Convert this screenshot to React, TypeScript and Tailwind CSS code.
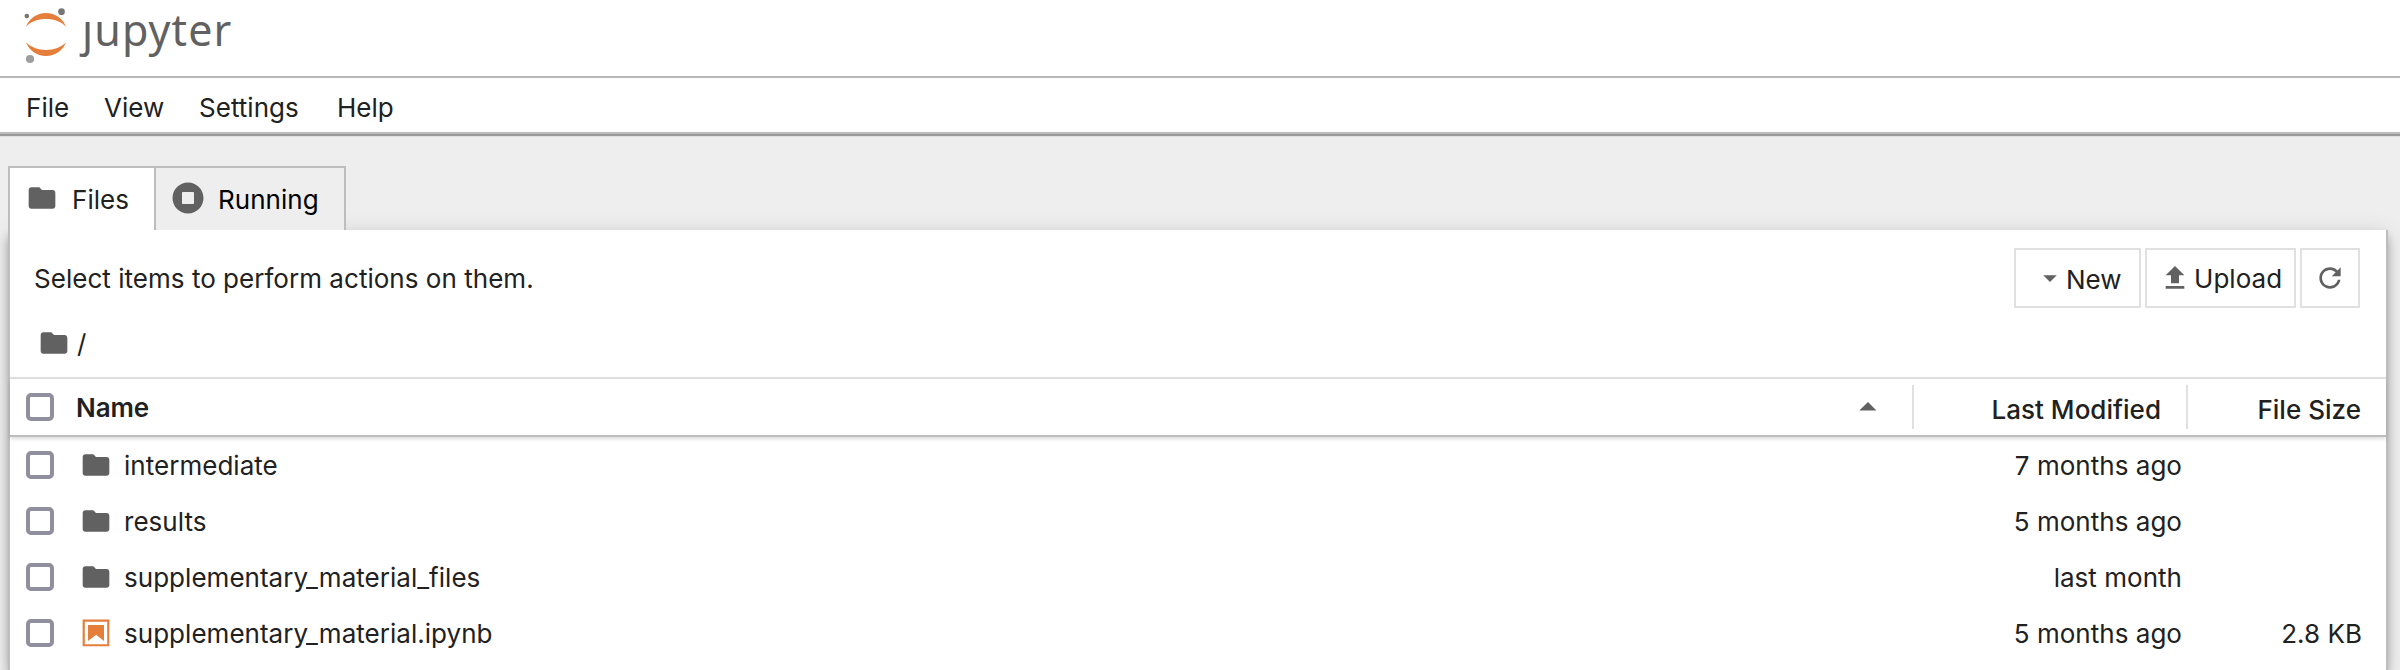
import React from "react";

const FolderIcon = () => (
  <svg viewBox="0 0 24 24" className="size-8 shrink-0 fill-[#616161]">
    <path d="M10 4H4c-1.1 0-1.99.9-1.99 2L2 18c0 1.1.9 2 2 2h16c1.1 0 2-.9 2-2V8c0-1.1-.9-2-2-2h-8l-2-2z" />
  </svg>
);

const NotebookIcon = () => (
  <svg viewBox="0 0 22 22" className="size-8 shrink-0 fill-[#e57e3b]">
    <path d="M18.7 3.3v15.4H3.3V3.3h15.4m1.5-1.5H1.8v18.3h18.3l.1-18.3z" />
    <path d="M16.5 16.5l-5.4-4.3-5.6 4.3v-11h11z" />
  </svg>
);

const RunningIcon = () => (
  <svg viewBox="0 0 512 512" className="size-8 shrink-0 fill-[#616161]">
    <path d="M256 8C119 8 8 119 8 256s111 248 248 248 248-111 248-248S393 8 256 8zm96 328c0 8.8-7.2 16-16 16H176c-8.8 0-16-7.2-16-16V176c0-8.8 7.2-16 16-16h160c8.8 0 16 7.2 16 16v160z" />
  </svg>
);

const UploadIcon = () => (
  <svg viewBox="0 0 24 24" className="size-8 shrink-0 fill-[#616161]">
    <path d="M9 16h6v-6h4l-7-7-7 7h4zm-4 2h14v2H5z" />
  </svg>
);

const RefreshIcon = () => (
  <svg viewBox="0 0 18 18" className="size-8 shrink-0 fill-[#616161]">
    <path d="M9 13.5c-2.49 0-4.5-2.01-4.5-4.5S6.51 4.5 9 4.5c1.24 0 2.36.52 3.17 1.33L10 8h5V3l-1.76 1.76C12.15 3.68 10.66 3 9 3 5.69 3 3.01 5.69 3.01 9S5.69 15 9 15c2.97 0 5.43-2.16 5.9-5h-1.52c-.46 2-2.24 3.5-4.38 3.5z" />
  </svg>
);

const CaretDown = () => (
  <svg viewBox="0 0 18 18" className="size-8 shrink-0 fill-[#616161]">
    <path d="M5.2 7.5L9 11.2l3.8-3.8H5.2z" />
  </svg>
);

const CaretUp = () => (
  <svg viewBox="0 0 18 18" className="size-10 shrink-0 fill-[#616161]">
    <path d="M5.2 10.5L9 6.8l3.8 3.8H5.2z" />
  </svg>
);

const Logo = () => (
  <svg viewBox="0 0 132 174" className="h-[58px] w-11 shrink-0">
    <path d="M6 62C16 37 38 21 66 21s50 16 60 41C112 47 90 39 66 39S20 47 6 62z" fill="#e57e3b" />
    <path d="M6 109c10 25 32 41 60 41s50-16 60-41c-14 15-36 23-60 23S20 124 6 109z" fill="#e57e3b" />
    <circle cx="8.5" cy="30" r="7" fill="#767677" />
    <circle cx="112.5" cy="17" r="10" fill="#767677" />
    <circle cx="18" cy="159" r="12.3" fill="#9e9e9e" />
  </svg>
);

const Checkbox = () => (
  <span role="checkbox" aria-checked="false" className="size-7 shrink-0 rounded-[5px] border-4 border-[#8f8f9d] bg-white" />
);

const menu = [
  { label: "File", width: "w-[78px]" },
  { label: "View", width: "w-[95px]" },
  { label: "Settings", width: "w-[138px]" },
  { label: "Help", width: "w-20" },
];

const files = [
  { name: "intermediate", modified: "7 months ago", size: "", notebook: false },
  { name: "results", modified: "5 months ago", size: "", notebook: false },
  { name: "supplementary_material_files", modified: "last month", size: "", notebook: false },
  { name: "supplementary_material.ipynb", modified: "5 months ago", size: "2.8 KB", notebook: true },
];

export default function App() {
  return (
    <div className="flex h-[670px] w-[2400px] flex-col overflow-hidden bg-[#eeeeee] font-['Inter',sans-serif] text-[26px] leading-8 tracking-[0.03px] text-[#212121]">
      <header className="flex h-[78px] shrink-0 items-start border-b-2 border-[#b8b8b8] bg-white pt-1.5 pl-6">
        <Logo />
        <div className="ml-3.5 h-[60px] font-['Noto_Sans',sans-serif] text-[43px] leading-[48px] tracking-[1.1px] text-[#616161]">
          <span className="inline-block [clip-path:inset(15px_-10px_-10px_-20px)]">j</span>upyter
        </div>
      </header>

      <nav className="z-10 flex h-14 shrink-0 items-center border-b-2 border-[#bdbdbd] bg-white pt-[5px] pl-[26px] shadow-[0_2px_1px_#9a9a9a]">
        {menu.map((m) => (
          <span key={m.label} className={m.width}>{m.label}</span>
        ))}
      </nav>

      <div className="z-10 mt-8 ml-2 flex h-16 w-[338px] shrink-0 bg-[#eeeeee]">
        <div className="flex w-[148px] items-center border-2 border-b-0 border-[#bdbdbd] bg-white pb-0.5 pl-4">
          <FolderIcon />
          <span className="mt-1 ml-3.5">Files</span>
        </div>
        <div className="flex w-[190px] items-center border-t-2 border-r-2 border-[#bdbdbd] pb-0.5 pl-4 text-black">
          <RunningIcon />
          <span className="mt-1 ml-3.5">Running</span>
        </div>
      </div>

      <main className="mr-3 ml-2 flex grow flex-col border-x-2 border-[#bdbdbd] bg-white shadow-[0_4px_8px_-2px_rgba(0,0,0,0.2),0_8px_10px_0_rgba(0,0,0,0.14),0_2px_20px_0_rgba(0,0,0,0.12)]">
        <div className="flex h-24 shrink-0 items-center justify-between pr-[26px] pl-6">
          <span className="mt-0.5">Select items to perform actions on them.</span>
          <div className="flex h-[60px] gap-1">
            <button className="flex w-[127px] items-center border-2 border-[#e0e0e0] pl-[18px]">
              <CaretDown />
              <span className="mt-[3px]">New</span>
            </button>
            <button className="flex w-[151px] items-center border-2 border-[#e0e0e0] pl-3">
              <UploadIcon />
              <span className="mt-0.5 ml-[3px]">Upload</span>
            </button>
            <button className="flex w-[60px] items-center justify-center border-2 border-[#e0e0e0]">
              <RefreshIcon />
            </button>
          </div>
        </div>

        <div className="flex h-[53px] shrink-0 items-start border-b-2 border-[#e0e0e0] pt-[1px] pl-7">
          <FolderIcon />
          <span className="mt-px ml-[7px]">/</span>
        </div>

        <div className="z-10 flex h-[58px] shrink-0 items-center border-b-2 border-[#bdbdbd] bg-white pl-4 font-medium shadow-[0_2px_4px_rgba(0,0,0,0.14)]">
          <Checkbox />
          <span className="mt-0.5 ml-[22px] grow font-semibold tracking-[-0.1px]">Name</span>
          <CaretUp />
          <div className="ml-6 flex h-11 w-[274px] items-center justify-end border-l-2 border-[#e0e0e0] pt-[5px] pr-[25px]">Last Modified</div>
          <div className="flex h-11 w-[200px] items-center justify-end border-l-2 border-[#e0e0e0] pt-[5px] pr-[25px]">File Size</div>
        </div>

        {files.map((f) => (
          <div key={f.name} className="flex h-14 shrink-0 items-center pl-4">
            <Checkbox />
            <span className="ml-[26px] flex">{f.notebook ? <NotebookIcon /> : <FolderIcon />}</span>
            <span className="mt-0.5 ml-3 grow">{f.name}</span>
            <span className="mt-0.5">{f.modified}</span>
            <span className="mt-0.5 w-[204px] pr-6 text-right">{f.size}</span>
          </div>
        ))}
      </main>
    </div>
  );
}
